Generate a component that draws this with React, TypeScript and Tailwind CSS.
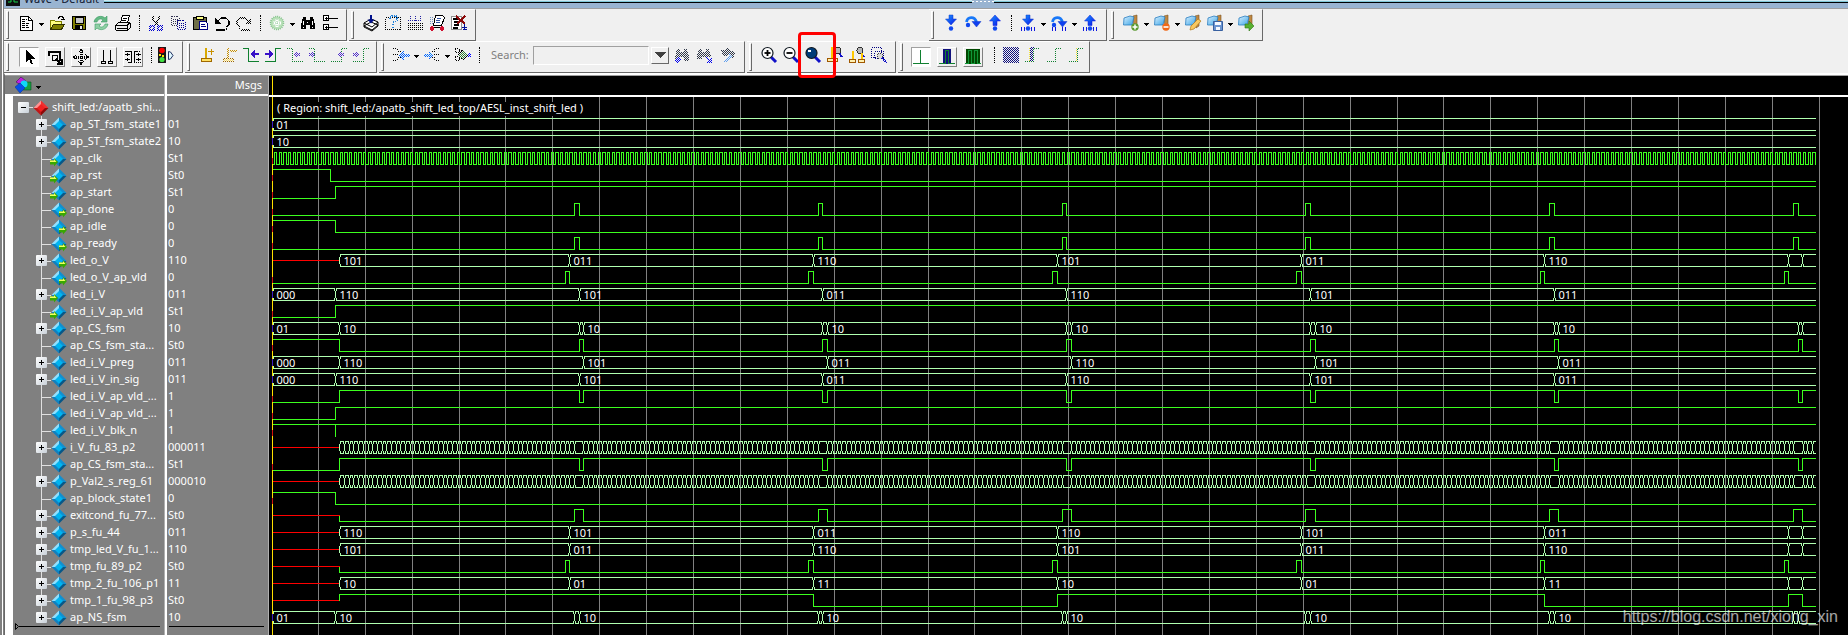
import React from "react";
import clsx from "clsx";

/* ---------- icon drawing helpers ---------- */

type IconProps = { children: React.ReactNode; dim?: boolean; smooth?: boolean };

const Icon = ({ children, dim, smooth }: IconProps) => (
  <svg
    viewBox="0 0 16 16"
    className="block h-4 w-4 overflow-visible"
    fill="none"
    shapeRendering={smooth ? "auto" : "crispEdges"}
    aria-hidden="true"
  >
    <g mask={dim ? "url(#dither)" : undefined}>{children}</g>
  </svg>
);

const Defs = () => (
  <svg className="absolute h-0 w-0" aria-hidden="true">
    <defs>
      <pattern id="checker" width="2" height="2" patternUnits="userSpaceOnUse">
        <rect width="1" height="1" fill="#fff" />
        <rect x="1" y="1" width="1" height="1" fill="#fff" />
      </pattern>
      <mask id="dither" maskUnits="userSpaceOnUse" x="-4" y="-4" width="28" height="28">
        <rect x="-4" y="-4" width="28" height="28" fill="url(#checker)" />
      </mask>
      <linearGradient id="blueArrow" x1="0" y1="0" x2="1" y2="1">
        <stop offset="0" stopColor="#1a9cff" />
        <stop offset="1" stopColor="#0a10e8" />
      </linearGradient>
      <linearGradient id="book" x1="0" y1="0" x2="1" y2="1">
        <stop offset="0" stopColor="#d8f0ff" />
        <stop offset="1" stopColor="#3ba4e6" />
      </linearGradient>
    </defs>
  </svg>
);

const DocIcon = () => (
  <Icon>
    <path d="M2.5 1.5h8l4 4v10h-12z" fill="#fff" stroke="#000" />
    <path d="M10.5 1.5v4h4" stroke="#000" />
    <path d="M4 4.5h5M4 6.5h4M4 8.5h8M4 10.5h6M4 12.5h8" stroke="#000" strokeDasharray="3 1" />
  </Icon>
);

const FolderIcon = () => (
  <Icon>
    <path d="M1.5 14.5v-9h4l1 1h6v3" fill="#ffff80" stroke="#808000" />
    <path d="M1.5 14.5l3-5h11l-3 5z" fill="#808000" stroke="#303000" />
    <path d="M9.5 3.5v-1h1v-1h3v1h1v2M12 4.5h4" stroke="#000" />
  </Icon>
);

const SaveIcon = () => (
  <Icon>
    <path d="M1.5 1.5h13v13h-12l-1-1z" fill="#808000" stroke="#000" />
    <path d="M4 2h8v6H4z" fill="#c8c8c8" stroke="#000" />
    <path d="M4 10h8v4H4z" fill="#000" />
    <path d="M9 11h2v3H9z" fill="#e8e8e8" />
  </Icon>
);

const ReloadIcon = () => (
  <Icon smooth>
    <path d="M1 7c1-6 8-7 11-4l2-2v6H8l2-2c-2-2-5-1-6 2z" fill="#65b985" stroke="#3d9c64" strokeWidth=".6" />
    <path d="M15 9c-1 6-8 7-11 4l-2 2V9h6l-2 2c2 2 5 1 6-2z" fill="#8fd0a5" stroke="#3d9c64" strokeWidth=".6" />
  </Icon>
);

const PrintIcon = () => (
  <Icon>
    <path d="M5.5 7.5l2-7h7l-2 7z" fill="#fff" stroke="#000" />
    <path d="M8 3.5h4M7 5.5h4" stroke="#000" />
    <path d="M.5 10.5l3-3h11l1 1v4l-3 3h-11l-1-1z" fill="#eee" stroke="#000" />
    <path d="M1 10.5h11l3-3M2 13.5h10M12.5 10v5" stroke="#000" />
  </Icon>
);

const CutIcon = () => (
  <Icon dim>
    <path d="M5 1v3l4 6M11 1v3l-4 6" stroke="#000" strokeWidth="1.6" />
    <path d="M2 11h4v4H2zM10 11h4v4h-4z" stroke="#0000d0" strokeWidth="1.6" />
  </Icon>
);

const CopyIcon = () => (
  <Icon>
    <path d="M1.5 1.5h6l2 2v7h-8zM3 4.5h5M3 6.5h5M3 8.5h5" stroke="#303050" strokeDasharray="1 1" />
    <path d="M7.5 5.5h6l2 2v7h-8z" fill="#f0f0f0" />
    <path d="M7.5 5.5h6l2 2v7h-8zM9 8.5h5M9 10.5h5M9 12.5h5" stroke="#000090" strokeDasharray="1 1" />
  </Icon>
);

const PasteIcon = () => (
  <Icon>
    <path d="M1 2h13v12H1z" fill="#707048" stroke="#000" />
    <path d="M4 1h7v3H4z" fill="#ffff80" stroke="#000" />
    <path d="M7.5 6.5h6l2 2v6h-8z" fill="#fff" stroke="#000080" />
    <path d="M9 9.5h4M9 11.5h5" stroke="#000080" />
  </Icon>
);

const UndoIcon = ({ redo }: { redo?: boolean }) => (
  <Icon dim={redo}>
    <g transform={redo ? "translate(16 0) scale(-1 1)" : undefined}>
      <path d="M1 3v6h6z" fill="#000" />
      <path d="M4 6l3-3h5l3 3v4l-3 2" stroke="#000" strokeWidth="1.4" />
      <path d="M2 14.5h9M12 13.5h1" stroke="#000" strokeWidth="2" />
    </g>
  </Icon>
);

const AddCircleIcon = () => (
  <Icon smooth>
    <circle cx="8" cy="8" r="6.5" fill="#b8e0b8" stroke="#80c088" strokeWidth="1.5" strokeDasharray="1 1" />
    <path d="M8 4v8M4 8h8" stroke="#fff" strokeWidth="3" />
    <path d="M8 4v8M4 8h8" stroke="#90c898" strokeDasharray="1 1" />
  </Icon>
);

const FindIcon = ({ dim, handle }: { dim?: boolean; handle?: boolean }) => (
  <Icon dim={dim}>
    <path d="M3 2h3v3h4V2h3l2 8v4h-5v-4H6v4H1v-4z" fill={dim ? "#303848" : "#000"} />
    {!dim && <path d="M4 6l-1 4M7 7h1M12 6l1 4M3 12h1M12 12h1" stroke="#fff" />}
    {handle && <path d="M2 15l4-4" stroke="#0000f0" strokeWidth="3" />}
  </Icon>
);

const FindNextIcon = () => (
  <Icon dim>
    <path d="M3 2h3v3h4V2h3l2 8H6v2H1v-3z" fill="#303848" />
    <path d="M10 10l5 5M11 15h4v-4" stroke="#0000f0" strokeWidth="2" />
  </Icon>
);

const FindOptIcon = () => (
  <Icon dim>
    <path d="M1 3h4l3-2 4 3 4 2-3 5-4-3-5 2z" fill="#303848" />
    <path d="M5 15l6-7" stroke="#60a0f0" strokeWidth="3" />
  </Icon>
);

const TreeIcon = () => (
  <Icon>
    <path d="M1.5.5h5v5h-5zM1.5 9.5h5v5h-5z" fill="#fff" stroke="#000" />
    <path d="M3 3.5h3M4.5 2v3M3 12.5h3M4.5 11v3M7 3.5h9M7 12.5h9" stroke="#000" />
  </Icon>
);

const StackIcon = () => (
  <Icon smooth>
    <path d="M1 11l7-4 7 3-6 5zM1 8l7-4 7 3-6 5z" fill="#fff" stroke="#000" />
    <path d="M1 8v4l8 4 6-5V7" stroke="#000" />
    <path d="M8 0v6" stroke="#00108c" strokeWidth="2" />
    <path d="M4.5 4.5h7L8 8.5z" fill="#00108c" />
  </Icon>
);

const HelpDocIcon = () => (
  <Icon>
    <path d="M.5 2.5h15v12H.5z" stroke="#000" strokeDasharray="1 1" />
    <path d="M5 4V2l2-1h4l1 2v2L8 8v3M8 12v2" stroke="#2080d8" strokeWidth="2" strokeDasharray="1 1" />
  </Icon>
);

const GridDownIcon = () => (
  <Icon>
    <path d="M1 8.5h15M1 10.5h15M1 12.5h15M1 14.5h15" stroke="#000" strokeDasharray="1 1" />
    <path d="M3.5 1v6M8.5 1v6M13.5 1v6M1 5.5h14" stroke="#2020a0" strokeDasharray="1 1" />
  </Icon>
);

const ScrollIcon = () => (
  <Icon>
    <path d="M1 2h4M1 4h3M1 6h3M1 8h3" stroke="#7090c0" strokeDasharray="1 1" />
    <path d="M6.5.5h7l2 2-3 8h-8z" fill="#fff" stroke="#000" />
    <path d="M8 3.5h4M7 5.5h4M7 7.5h4" stroke="#3050a0" />
    <path d="M3 12.5h10" stroke="#000" />
    <path d="M1 12h4v3H1zM11 12h4v3h-4zM2 11h2v5H2zM12 11h2v5h-2z" fill="#d01030" />
  </Icon>
);

const RemoveListIcon = () => (
  <Icon>
    <path d="M.5 1.5h10v13H.5z" fill="#fff" stroke="#909090" />
    <path d="M2 4h5M3 7h5M3 10h5M2 13h5" stroke="#000" strokeWidth="1.5" />
    <path d="M5 1l9 8M14 1L6 9" stroke="#8c0a0a" strokeWidth="2" />
    <path d="M13.5 9v6M11 12.5h5M12 14.5h4" stroke="#00109c" />
  </Icon>
);

type StepProps = { dir: "down" | "over" | "up"; bars?: boolean };
const StepIcon = ({ dir, bars }: StepProps) => (
  <Icon smooth>
    {dir === "down" && <path d="M6 0h4v4h3.5L8 10 2.500 4H6z" fill="url(#blueArrow)" stroke="#1038c8" strokeWidth=".5" />}
    {dir === "up" && <path d="M6 10.5h4V6h3.500L8 0 2.500 6H6z" fill="url(#blueArrow)" stroke="#1018d8" strokeWidth=".5" />}
    {dir === "over" && (
      <>
        <path d="M1.5 7C2.500 1.500 9.500 1 11.500 7" stroke="#1878f8" strokeWidth="2.800" />
        <path d="M7 6.5h9L11.500 12z" fill="#1040f0" stroke="#1038c8" strokeWidth=".5" />
      </>
    )}
    <circle cx={dir === "over" ? 3 : 8} cy={dir === "over" ? 10 : 13.5} r="2.200" fill="#1048f0" />
    {bars && <path d="M1.5 11.5v4M4.500 11.500v4M11.500 11.500v4M14.500 11.500v4" stroke="#1018e0" shapeRendering="crispEdges" />}
  </Icon>
);

type BookmarkProps = { kind: "add" | "remove" | "edit" | "save" | "go" };
const BookmarkIcon = ({ kind }: BookmarkProps) => (
  <Icon smooth>
    <path d="M10 1l4-1v11l-3 2z" fill="#c08840" stroke="#7a5220" strokeWidth=".6" />
    <path d="M1 3l6-2 4 1-2 8H.5z" fill="url(#book)" stroke="#2a7ec0" strokeWidth=".8" />
    {kind === "add" && (
      <>
        <circle cx="12" cy="12" r="3.700" fill="#5a9a30" />
        <path d="M12 9.500v5M9.500 12h5" stroke="#fff" strokeWidth="1.500" />
      </>
    )}
    {kind === "remove" && (
      <>
        <circle cx="12" cy="12" r="3.700" fill="#f06818" />
        <path d="M9.500 12h5" stroke="#fff" strokeWidth="1.600" />
      </>
    )}
    {kind === "edit" && <path d="M5 15l1-4 7-7 3 2-7 8z" fill="#f8c860" stroke="#b07818" strokeWidth=".7" />}
    {kind === "save" && (
      <>
        <path d="M6.500 6.500h9v9h-9z" fill="#6a94d0" stroke="#3860a0" />
        <path d="M8 7h6v3H8zM9 12h4v3H9z" fill="#f4f8ff" />
      </>
    )}
    {kind === "go" && <path d="M7 9h4V6l5 5-5 5v-3H7z" fill="#58b030" stroke="#307818" strokeWidth=".6" />}
  </Icon>
);

const PointerIcon = () => (
  <Icon>
    <path d="M5 1v12l3-3 2 5h2l-2-5h4z" fill="#000" />
  </Icon>
);

const ZoomModeIcon = () => (
  <Icon>
    <path d="M2 7V3h11v9" stroke="#000" strokeWidth="1.500" />
    <path d="M5.500 6.500h5v5h-5z" stroke="#000" />
    <path d="M9 10l5 5M15 10v5h-5" stroke="#000" strokeWidth="2" />
  </Icon>
);

const PanIcon = () => (
  <Icon>
    <path d="M8 1v14M1 8h14" stroke="#000" strokeWidth="3" strokeDasharray="1 1" />
    <path d="M5.500 3.500L8 .5l2.500 3M5.500 12.500l2.500 3 2.500-3M3.500 5.500L.5 8l3 2.500M12.500 5.500l3 2.500-3 2.500" stroke="#000" />
  </Icon>
);

const TwoCursorIcon = () => (
  <Icon>
    <path d="M4.500 1v11M11.500 1v11M2 12.500h5M2 14.500h5M2.500 12v3M6.500 12v3M9 12.500h5M9 14.500h5M9.500 12v3M13.500 12v3" stroke="#000" />
  </Icon>
);

const EditModeIcon = () => (
  <Icon>
    <path d="M0 2.500h6.500v11H3M9.500 14v-12h3" stroke="#000" />
    <path d="M12 2.500h4M11 13.500h5" stroke="#000" strokeDasharray="1 1" />
    <path d="M0 5.500h5M0 10.500h5M11 5.500h5M11 10.500h5M2.500 4v3M2.500 9v3M13.500 4v3M13.500 9v3" stroke="#000" />
  </Icon>
);

const TrafficIcon = () => (
  <Icon smooth>
    <path d="M0 0h8v16H0z" fill="#181818" />
    <circle cx="4" cy="3.500" r="2.800" fill="#f00" />
    <path d="M1 7h2v2H1zM4 8h2v2H4z" fill="#ffe000" />
    <circle cx="4" cy="12.500" r="2.600" fill="#40e040" />
    <path d="M10.500 4.500v8l2-.5 2.500-3.500-2.500-3.500z" fill="#e0f8ff" stroke="#203060" />
  </Icon>
);

const CursorAddIcon = ({ dim }: { dim?: boolean }) => (
  <Icon dim={dim}>
    <path d="M7 1v10" stroke={dim ? "#c89000" : "#d8a800"} strokeWidth="2" />
    <path d="M2 11.500h10v3H2z" fill="#ffe060" stroke="#a06800" />
    <path d={dim ? "M9 4h7" : "M9 4.500h6M12.500 2v6"} stroke="#c89000" strokeWidth={dim ? 2 : 1} />
  </Icon>
);

const EdgeIcon = ({ rise, dim, flip }: { rise?: boolean; dim?: boolean; flip?: boolean }) => (
  <Icon>
    <path
      d={rise ? "M0 14.500h10.500v-13H16" : "M0 1.500h5.500v13H16"}
      stroke="#108030"
      strokeDasharray={dim ? "1 1" : undefined}
    />
    {dim ? (
      <path
        d={flip ? "M0 6.500h5M1 7.500h5M0 8.500h5M3 5.500h1M3 9.500h1" : "M8 6.500h5M7 7.500h5M8 8.500h5M9 5.500h1M9 9.500h1"}
        stroke="#5030c8"
        strokeDasharray="1 1"
      />
    ) : (
      <path d={flip ? "M0 6h4V3l5 4-5 4V8H0z" : "M16 6h-4V3L7 7l5 4V8h4z"} fill="#3810c8" />
    )}
  </Icon>
);

const BranchIcon = ({ kind }: { kind: "out" | "in" | "mix" }) => (
  <Icon>
    <g strokeDasharray="1 1" stroke="#000">
      {kind === "out" && <path d="M0 1.500h4M4 2.500h2M5 4.500h3M0 7.500h6M5 10.500h3M4 12.500h2M0 13.500h4" />}
      {kind === "in" && <path d="M12 1.500h4M10 2.500h2M8 4.500h3M10 7.500h6M8 10.500h3M10 12.500h2M12 13.500h4" />}
      {kind === "mix" && <path d="M0 1.500h4v4H0M0 9.500h4v4H0M0 1.500v4M0 9.500v4M4 3.500h4M4 11.500h4" />}
    </g>
    <g mask="url(#dither)">
      {kind === "out" && <path d="M6 8l4-4v3h6v2h-6v3z" fill="#0060ff" stroke="#0060ff" />}
      {kind === "in" && <path d="M9 8L5 4v3H0v2h5v3z" fill="#0080ff" stroke="#0060ff" />}
      {kind === "mix" && <path d="M3 8l5-5 5 5-5 5z" fill="#308030" stroke="#000" />}
      {kind === "mix" && <path d="M13 6h3v4h-3z" fill="#0000ff" />}
    </g>
  </Icon>
);

const MagnifierIcon = ({ kind }: { kind: "in" | "out" | "full" }) => (
  <Icon smooth>
    <path d="M10 10l5 5" stroke="#1010c8" strokeWidth="3" />
    <circle cx="6.500" cy="6" r="5.500" fill={kind === "full" ? "#003c78" : "#fff"} stroke="#101820" strokeWidth="1.200" />
    {kind !== "full" && <path d="M3.500 6h6" stroke="#000" strokeWidth="1.800" />}
    {kind === "in" && <path d="M6.500 3v6" stroke="#000" strokeWidth="1.800" />}
    {kind === "full" && <path d="M3 3h3v2H3z" fill="#fff" />}
  </Icon>
);

const ZoomCursorIcon = ({ pair }: { pair?: boolean }) => (
  <Icon>
    <path d="M12 6l3 4" stroke="#1010c8" strokeWidth="2" />
    <circle cx="11" cy="3.500" r="3" fill="#b8b8b8" stroke="#303030" />
    {pair ? (
      <>
        <path d="M4 4v8M13 6v6" stroke="#ffc800" strokeWidth="2" />
        <path d="M.5 12.500h6v3h-6zM9.500 12.500h6v3h-6z" fill="#fff0b0" stroke="#a05800" />
      </>
    ) : (
      <>
        <path d="M5 0v11" stroke="#ffc800" strokeWidth="2" />
        <path d="M.5 11.500h10v3H.5z" fill="#fff0b0" stroke="#a05800" />
      </>
    )}
  </Icon>
);

const ZoomAreaIcon = () => (
  <Icon>
    <path d="M.5.5h10v10H.5zM3.500 4.500h9v7h-9z" stroke="#000080" strokeDasharray="1 1" />
    <circle cx="9" cy="9" r="3" fill="#d8d8d8" stroke="#404040" strokeDasharray="1 1" />
    <path d="M11 11l5 5" stroke="#1010c8" strokeWidth="2" strokeDasharray="1 1" />
  </Icon>
);

const PulseIcon = ({ kind }: { kind: "line" | "narrow" | "wide" }) => (
  <Icon>
    {kind === "line" && <path d="M0 14.500h16M7.500 1v13" stroke="#108030" />}
    {kind === "narrow" && (
      <>
        <path d="M4 0h8v15H4z" fill="#10107c" />
        <path d="M0 14.500h6.500v-13h3v13H16" stroke="#108030" />
      </>
    )}
    {kind === "wide" && (
      <>
        <path d="M1 0h14v15H1z" fill="#004800" />
        <path d="M0 14.500h3.500v-13h3v13h3v-13h3v13H16" stroke="#109838" />
      </>
    )}
  </Icon>
);

const ExpandIcon = ({ kind }: { kind: "all" | "delta" | "edge" | "event" }) => (
  <Icon>
    {kind === "all" && <path d="M0 0h16v16H0z" fill="#10107c" mask="url(#dither)" />}
    {kind === "delta" && <path d="M5 0h4v15H5z" fill="#10107c" mask="url(#dither)" />}
    {kind !== "all" && <path d="M0 14.500h8.500v-13H15" stroke="#108030" strokeDasharray="1 1" />}
    {kind === "event" && <path d="M7.500 1v14" stroke="#f0e040" strokeDasharray="1 1" />}
    {kind === "delta" && <path d="M4.500 1v14" stroke="#f0e040" strokeDasharray="1 1" />}
  </Icon>
);

/* ---------- toolbars ---------- */

const Tool = ({ label, children }: { label: string; children: React.ReactNode }) => (
  <button type="button" aria-label={label} className="relative flex h-[22px] w-[22px] shrink-0 items-center justify-center">
    {children}
  </button>
);

const Caret = ({ label = "More" }: { label?: string }) => (
  <button type="button" aria-label={label} className="flex h-[22px] w-[9px] shrink-0 items-center justify-center">
    <svg viewBox="0 0 5 3" className="mt-0.5 block h-[3px] w-[5px]" shapeRendering="crispEdges" aria-hidden="true">
      <path d="M0 0h5v1H4v1H3v1H2V2H1V1H0z" />
    </svg>
  </button>
);

const Separator = () => (
  <span className="flex w-[11px] shrink-0 justify-center">
    <span className="h-4 border-l border-dotted border-black" />
  </span>
);

const Mode = ({ label, active, children }: { label: string; active?: boolean; children: React.ReactNode }) => (
  <button
    type="button"
    aria-label={label}
    aria-pressed={!!active}
    className={clsx(
      "mr-1.5 mt-1 flex h-5 w-5 shrink-0 items-center justify-center border",
      active
        ? "border-b-white border-l-[#a0a0a0] border-r-white border-t-[#a0a0a0] bg-white"
        : "border-b-[#808080] border-l-white border-r-[#808080] border-t-white",
    )}
  >
    {children}
  </button>
);

const Toolbar = ({ label, className, children }: { label: string; className?: string; children: React.ReactNode }) => (
  <div
    role="toolbar"
    aria-label={label}
    className={clsx(
      "mr-0.5 flex h-8 shrink-0 items-center border-b border-r border-t border-b-[#696969] border-r-[#696969] border-t-white pb-1",
      className,
    )}
  >
    <span className="mb-[-4px] ml-0.5 mr-1.5 h-[28px] w-[3px] shrink-0 border border-b-[#696969] border-l-white border-r-[#696969] border-t-white" />
    {children}
  </div>
);

const ToolbarRows = () => (
  <div className="flex flex-col bg-[#f0f0f0]">
    <div className="flex">
      <Toolbar label="Standard" className="w-[343px]">
        <Tool label="New"><DocIcon /></Tool>
        <Caret />
        <Tool label="Open"><FolderIcon /></Tool>
        <Tool label="Save"><SaveIcon /></Tool>
        <Tool label="Reload"><ReloadIcon /></Tool>
        <Tool label="Print"><PrintIcon /></Tool>
        <Separator />
        <Tool label="Cut"><CutIcon /></Tool>
        <Tool label="Copy"><CopyIcon /></Tool>
        <Tool label="Paste"><PasteIcon /></Tool>
        <Tool label="Undo"><UndoIcon /></Tool>
        <Tool label="Redo"><UndoIcon redo /></Tool>
        <Separator />
        <Tool label="Add"><AddCircleIcon /></Tool>
        <Caret />
        <Tool label="Find"><FindIcon /></Tool>
        <Tool label="Collapse all"><TreeIcon /></Tool>
      </Toolbar>
      <Toolbar label="Compile" className="w-[127px]">
        <Tool label="Compile"><StackIcon /></Tool>
        <Tool label="Compile out of date"><HelpDocIcon /></Tool>
        <Tool label="Compile all"><GridDownIcon /></Tool>
        <Tool label="Simulate"><ScrollIcon /></Tool>
        <Tool label="Break"><RemoveListIcon /></Tool>
      </Toolbar>
      <Toolbar label="Step" className="ml-[451px] w-[178px]">
        <Tool label="Step into"><StepIcon dir="down" /></Tool>
        <Tool label="Step over"><StepIcon dir="over" /></Tool>
        <Tool label="Step out"><StepIcon dir="up" /></Tool>
        <Separator />
        <Tool label="Step into current"><StepIcon dir="down" bars /></Tool>
        <Caret />
        <Tool label="Step over current"><StepIcon dir="over" bars /></Tool>
        <Caret />
        <Tool label="Step out current"><StepIcon dir="up" bars /></Tool>
      </Toolbar>
      <Toolbar label="Bookmarks" className="w-[154px]">
        <Tool label="Add bookmark"><BookmarkIcon kind="add" /></Tool>
        <Caret />
        <Tool label="Delete bookmark"><BookmarkIcon kind="remove" /></Tool>
        <Caret />
        <Tool label="Manage bookmarks"><BookmarkIcon kind="edit" /></Tool>
        <Tool label="Save bookmarks"><BookmarkIcon kind="save" /></Tool>
        <Caret />
        <Tool label="Jump to bookmark"><BookmarkIcon kind="go" /></Tool>
      </Toolbar>
    </div>
    <div className="flex">
      <Toolbar label="Mouse mode" className="w-[179px]">
        <span className="w-1 shrink-0" />
        <Mode label="Select mode" active><PointerIcon /></Mode>
        <Mode label="Zoom mode"><ZoomModeIcon /></Mode>
        <Mode label="Pan mode"><PanIcon /></Mode>
        <Mode label="Two cursor mode"><TwoCursorIcon /></Mode>
        <Mode label="Edit mode"><EditModeIcon /></Mode>
        <span className="flex w-1 shrink-0 justify-center">
          <span className="h-4 border-l border-dotted border-black" />
        </span>
        <span className="w-0.5 shrink-0" />
        <Tool label="Stop drawing"><TrafficIcon /></Tool>
      </Toolbar>
      <Toolbar label="Wave cursor" className="w-[192px]">
        <Tool label="Insert cursor"><CursorAddIcon /></Tool>
        <Tool label="Delete cursor"><CursorAddIcon dim /></Tool>
        <Tool label="Previous transition"><EdgeIcon /></Tool>
        <Tool label="Next transition"><EdgeIcon rise flip /></Tool>
        <Tool label="Previous falling edge"><EdgeIcon dim /></Tool>
        <Tool label="Next falling edge"><EdgeIcon dim flip /></Tool>
        <Tool label="Previous rising edge"><EdgeIcon rise dim /></Tool>
        <Tool label="Next rising edge"><EdgeIcon rise dim flip /></Tool>
      </Toolbar>
      <Toolbar label="Search" className="w-[366px]">
        <Tool label="Previous event"><BranchIcon kind="out" /></Tool>
        <Caret />
        <Tool label="Next event"><BranchIcon kind="in" /></Tool>
        <Caret />
        <Tool label="Trace"><BranchIcon kind="mix" /></Tool>
        <Separator />
        <label htmlFor="search" className="ml-1.5 w-[42px] shrink-0 text-[11px] text-[#808080]">Search:</label>
        <input
          id="search"
          type="text"
          className="h-[19px] w-[116px] shrink-0 border border-b-white border-l-[#a0a0a0] border-r-white border-t-[#a0a0a0] bg-[#f0f0f0] px-1"
        />
        <button
          type="button"
          aria-label="Search history"
          className="mx-0.5 flex h-[17px] w-[18px] shrink-0 items-center justify-center border border-b-[#696969] border-l-white border-r-[#696969] border-t-white"
        >
          <svg viewBox="0 0 11 6" className="block h-[6px] w-[11px]" shapeRendering="crispEdges" aria-hidden="true">
            <path d="M0 0h11L6 6H5z" fill="#404040" />
          </svg>
        </button>
        <Tool label="Search backward"><FindIcon dim handle /></Tool>
        <Tool label="Search forward"><FindNextIcon /></Tool>
        <span className="w-0.5 shrink-0" />
        <Tool label="Search options"><FindOptIcon /></Tool>
      </Toolbar>
      <Toolbar label="Zoom" className="w-[149px]">
        <Tool label="Zoom in"><MagnifierIcon kind="in" /></Tool>
        <Tool label="Zoom out"><MagnifierIcon kind="out" /></Tool>
        <Tool label="Zoom full">
          <MagnifierIcon kind="full" />
          <span className="absolute -left-1 -top-3 z-10 h-[46px] w-[38px] rounded-sm border-[3px] border-[#ff0000]" />
        </Tool>
        <Tool label="Zoom in on cursor"><ZoomCursorIcon /></Tool>
        <Tool label="Zoom between cursors"><ZoomCursorIcon pair /></Tool>
        <Tool label="Zoom other window"><ZoomAreaIcon /></Tool>
      </Toolbar>
      <Toolbar label="Expanded time" className="w-[192px]">
        <span className="w-0.5 shrink-0" />
        <Mode label="Expanded time off" active><PulseIcon kind="line" /></Mode>
        <Mode label="Delta mode"><PulseIcon kind="narrow" /></Mode>
        <Mode label="Event mode"><PulseIcon kind="wide" /></Mode>
        <Separator />
        <Tool label="Expand all"><ExpandIcon kind="all" /></Tool>
        <Tool label="Expand at cursor"><ExpandIcon kind="delta" /></Tool>
        <Tool label="Collapse all time"><ExpandIcon kind="edge" /></Tool>
        <Tool label="Collapse at cursor"><ExpandIcon kind="event" /></Tool>
      </Toolbar>
    </div>
  </div>
);

/* ---------- signals ---------- */

const ROW = 17;
const ORIGIN = 269; // left edge of the wave canvas
const TICK = 4.69;
const PERIOD = 243.8;
const DONE = 574.4;
const END = 1816;
const RESET = 335;
const FIRST = 339;

const cycles = [0, 1, 2, 3, 4, 5];
const at = (ticks: number, k: number) => DONE + ticks * TICK + k * PERIOD;
const pulses = (from: number, to: number) => cycles.flatMap((k) => [at(from, k), at(to, k)]);

type Cut = [number, string];
type Signal = {
  name: string;
  value: string;
  group?: boolean;
  port?: "in" | "out";
  level?: 0 | 1;
  unknown?: boolean;
  edges?: number[];
  cuts?: Cut[];
};

// bus that takes a new value once in every cycle
const steps = (ticks: number, labels: string[]): Cut[] => labels.map((l, k) => [at(ticks, k), l]);
const tail: Cut[] = [[at(-1, 5), ""], [at(2, 5), ""]];
const double = (ticks: number): Cut[] =>
  cycles.flatMap((k): Cut[] => [[at(ticks, k), ""], [at(ticks + 1, k), k < 5 ? "10" : ""]]);

const counter: Cut[] = (() => {
  const out: Cut[] = [];
  const first = Math.round((FIRST - DONE) / TICK);
  for (let n = first; DONE + n * TICK < END - 2; n++) {
    if (n % 52 === 1) continue;
    out.push([DONE + n * TICK, ""]);
  }
  return out;
})();

const clock = (() => {
  const out: number[] = [];
  for (let x = 274.4; x < END; x += TICK) out.push(x, x + TICK / 2);
  return out;
})();

const signals: Signal[] = [
  { name: "ap_ST_fsm_state1", value: "01", group: true, cuts: [[272, "01"]] },
  { name: "ap_ST_fsm_state2", value: "10", group: true, cuts: [[272, "10"]] },
  { name: "ap_clk", value: "St1", port: "in", level: 0, edges: clock },
  { name: "ap_rst", value: "St0", port: "in", level: 1, edges: [330] },
  { name: "ap_start", value: "St1", port: "in", level: 0, edges: [RESET] },
  { name: "ap_done", value: "0", port: "out", level: 0, edges: pulses(0, 1) },
  { name: "ap_idle", value: "0", port: "out", level: 1, edges: [RESET] },
  { name: "ap_ready", value: "0", port: "out", level: 0, edges: pulses(0, 1) },
  { name: "led_o_V", value: "110", group: true, port: "out", unknown: true, cuts: [[FIRST, "101"], ...steps(-1, ["011", "110", "101", "011", "110"]), ...tail] },
  { name: "led_o_V_ap_vld", value: "0", port: "out", level: 0, edges: pulses(-2, -1) },
  { name: "led_i_V", value: "011", group: true, port: "in", cuts: [[272, "000"], [RESET, "110"], ...steps(1, ["101", "011", "110", "101", "011"])] },
  { name: "led_i_V_ap_vld", value: "St1", port: "in", level: 0, edges: [RESET] },
  { name: "ap_CS_fsm", value: "10", group: true, cuts: [[272, "01"], [FIRST, "10"], ...double(1)] },
  { name: "ap_CS_fsm_sta...", value: "St0", level: 1, edges: [FIRST, ...pulses(1, 2)] },
  { name: "led_i_V_preg", value: "011", group: true, cuts: [[272, "000"], [FIRST, "110"], ...steps(2, ["101", "011", "110", "101", "011"])] },
  { name: "led_i_V_in_sig", value: "011", group: true, cuts: [[272, "000"], [RESET, "110"], ...steps(1, ["101", "011", "110", "101", "011"])] },
  { name: "led_i_V_ap_vld_...", value: "1", level: 0, edges: [FIRST, ...pulses(1, 2)] },
  { name: "led_i_V_ap_vld_...", value: "1", level: 0, edges: [RESET] },
  { name: "led_i_V_blk_n", value: "1", level: 1, edges: [RESET, RESET] },
  { name: "i_V_fu_83_p2", value: "000011", group: true, unknown: true, cuts: counter },
  { name: "ap_CS_fsm_sta...", value: "St1", level: 0, edges: [FIRST, ...pulses(1, 2)] },
  { name: "p_Val2_s_reg_61", value: "000010", group: true, unknown: true, cuts: counter },
  { name: "ap_block_state1", value: "0", level: 1, edges: [RESET] },
  { name: "exitcond_fu_77...", value: "St0", group: true, unknown: true, level: 0, edges: pulses(0, 2) },
  { name: "p_s_fu_44", value: "011", group: true, unknown: true, cuts: [[FIRST, "110"], ...steps(-1, ["101", "011", "110", "101", "011"]), ...tail] },
  { name: "tmp_led_V_fu_1...", value: "110", group: true, unknown: true, cuts: [[FIRST, "101"], ...steps(-1, ["011", "110", "101", "011", "110"]), ...tail] },
  { name: "tmp_fu_89_p2", value: "St0", group: true, unknown: true, level: 0, edges: pulses(-2, -1) },
  { name: "tmp_2_fu_106_p1", value: "11", group: true, unknown: true, cuts: [[FIRST, "10"], ...steps(-1, ["01", "11", "10", "01", "11"]), ...tail] },
  { name: "tmp_1_fu_98_p3", value: "St0", group: true, unknown: true, level: 1, edges: [at(-1, 1), at(-1, 2), at(-1, 4), at(-1, 5), at(2, 5)] },
  { name: "ap_NS_fsm", value: "10", group: true, cuts: [[272, "01"], [RESET, "10"], ...double(0)] },
];

const px = (x: number) => Math.floor(x) - ORIGIN + 0.5;

const logicPath = (s: Signal) => {
  let level = s.level ?? 0;
  let d = s.unknown ? `M${px(FIRST)} 8.5V${level ? 2.5 : 14.5}` : `M${px(272)} ${level ? 2.5 : 14.5}`;
  for (const x of s.edges ?? []) {
    level = level ? 0 : 1;
    d += `H${px(x)}V${level ? 2.5 : 14.5}`;
  }
  return d + `H${END - ORIGIN}`;
};

const busPath = (s: Signal) => {
  const cuts = s.cuts ?? [];
  let d = "";
  cuts.forEach(([pos], i) => {
    const x = px(pos);
    const end = i + 1 < cuts.length ? px(cuts[i + 1][0]) - 0.5 : END - ORIGIN;
    if (i > 0) d += `M${x - 1} 2v3M${x - 1} 12v3`;
    d += `M${x + 1} 2v3M${x + 1} 12v3`;
    if (pos > 272) d += `M${x} 5v7`;
    d += `M${x + 0.5} 2.5H${end}M${x + 0.5} 14.5H${end}`;
  });
  return d;
};

const Wave = ({ signal, row }: { signal: Signal; row: number }) => (
  <g transform={`translate(0 ${2 + row * ROW})`}>
    {signal.unknown && <path d={`M3 8.500H${px(FIRST)}`} stroke="#ff0000" />}
    {signal.cuts ? (
      <path d={busPath(signal)} stroke="#b0ffb0" />
    ) : (
      <path d={logicPath(signal)} stroke="#3cff1e" />
    )}
    {signal.cuts?.map(([x, label], i) =>
      label ? (
        <text key={i} x={px(x) + 4} y="13" fill="#fff">
          {label}
        </text>
      ) : null,
    )}
    <path d="M3.500 0v17" stroke="#ffe000" />
    {!signal.unknown && <path d={signal.cuts ? "M3.500 5v7" : "M3.500 8v6"} stroke={signal.cuts ? "#4020c0" : "#d01010"} />}
  </g>
);

const gridLines = Array.from({ length: 33 }, (_, i) => Math.floor(318.3 + i * 46.9) - ORIGIN + 0.5);

const WaveCanvas = () => (
  <svg width="1579" height="538" className="block" fill="none" shapeRendering="crispEdges" role="img" aria-label="Waveforms">
    {gridLines.map((x) => (
      <path key={x} d={`M${x} 0v538`} stroke="#808080" />
    ))}
    <rect x="6" y="5" width="302" height="14" fill="#000" />
    <path d="M3.500 0v538" stroke="#ffe000" />
    <g className="text-[11px]">
      <text x="8" y="15" fill="#fff" xmlSpace="preserve">
        ( Region: shift_led:/apatb_shift_led_top/AESL_inst_shift_led )
      </text>
      {signals.map((s, i) => (
        <Wave key={i} signal={s} row={i + 1} />
      ))}
    </g>
  </svg>
);

/* ---------- signal tree ---------- */

const Diamond = ({ red, port }: { red?: boolean; port?: "in" | "out" }) => (
  <svg viewBox="0 0 16 16" className="block h-4 w-4 shrink-0 overflow-visible" aria-hidden="true">
    <path d="M8 .5L.5 8 8 8z" fill={red ? "#ff9090" : "#90e0ff"} />
    <path d="M8 .5L15.500 8H8z" fill={red ? "#f03030" : "#1090d0"} />
    <path d="M.5 8L8 15.500V8z" fill={red ? "#c01818" : "#1080c0"} />
    <path d="M15.500 8L8 15.500V8z" fill={red ? "#900808" : "#085888"} />
    <path d="M8 4L12 8 8 12 4 8z" fill={red ? "#f02020" : "#00b4f0"} />
    {port && (
      <g transform={port === "in" ? "translate(-1 7)" : "translate(8 7)"}>
        <path d="M0 2.500h4V0l4 4-4 4.500V6.500H0z" fill="#38a800" />
        <path d="M0 2.500h4V1l2.500 3H0z" fill="#f0ff60" />
      </g>
    )}
  </svg>
);

const Toggle = ({ open }: { open?: boolean }) => (
  <button
    type="button"
    aria-label={open ? "Collapse" : "Expand"}
    aria-expanded={!!open}
    className="relative flex h-[11px] w-[11px] shrink-0 items-center justify-center rounded-[1px] bg-gradient-to-br from-white to-[#c8d0d8]"
  >
    <svg viewBox="0 0 5 5" className="block h-[5px] w-[5px]" shapeRendering="crispEdges" aria-hidden="true">
      <path d={open ? "M0 2h5v1H0z" : "M0 2h2V0h1v2h2v1H3v2H2V3H0z"} />
    </svg>
  </button>
);

const TreeRow = ({ signal, last }: { signal: Signal; last: boolean }) => (
  <li className="flex h-[17px] items-center whitespace-pre pl-[23px]">
    <span className="relative flex h-[17px] w-[15px] items-center">
      <span className={clsx("absolute left-[5px] top-0 w-px bg-[#e0e0e0]", last ? "h-2" : "h-[17px]")} />
      <span className="absolute left-[5px] top-[9px] h-px w-2.5 bg-[#e0e0e0]" />
      {signal.group && <Toggle />}
    </span>
    <Diamond port={signal.port} />
    <span className="ml-[3px] self-start leading-[15px]">{signal.name}</span>
  </li>
);

const headerClass = "flex h-[21px] shrink-0 items-center border-b-2 border-t border-b-white border-t-[#a0a0a0]";

const NamePane = () => (
  <section className="flex w-[160px] shrink-0 flex-col border-r border-r-[#b0b0b0] bg-[#808080]">
    <div className={headerClass}>
      <button type="button" aria-label="Display options" className="ml-2.5 flex items-center">
        <svg viewBox="0 0 17 16" className="block h-4 w-[17px]" aria-hidden="true">
          <path d="M1 5l5-5 5 4-5 4z" fill="#c020e0" stroke="#401050" strokeWidth=".6" />
          <path d="M8 5h8v8H8z" fill="#18a040" stroke="#085020" strokeWidth=".6" />
          <circle cx="9" cy="7" r="3.500" fill="#10d8f8" />
          <path d="M0 10l5-4 5 5-5 5z" fill="#0850e8" stroke="#0838a0" strokeWidth=".6" />
        </svg>
        <svg viewBox="0 0 5 3" className="ml-1 mt-1 block h-[3px] w-[5px]" shapeRendering="crispEdges" aria-hidden="true">
          <path d="M0 0h5v1H4v1H3v1H2V2H1V1H0z" />
        </svg>
      </button>
    </div>
    <div className="flex-1 border-l-8 border-l-white pt-[3px]">
      <div className="flex h-[17px] items-center whitespace-pre pl-[5px]">
        <Toggle open />
        <span className="h-px w-1 bg-[#e0e0e0]" />
        <Diamond red />
        <span className="ml-[3px] self-start leading-[15px]">shift_led:/apatb_shi...</span>
      </div>
      <ul>
        {signals.map((s, i) => (
          <TreeRow key={i} signal={s} last={i === signals.length - 1} />
        ))}
      </ul>
      <div className="ml-0.5 mr-1 flex h-px items-center">
        <svg viewBox="0 0 4 7" className="block h-[7px] w-1 shrink-0" aria-hidden="true">
          <path d="M.5.5L3.500 3.500.5 6.500z" fill="#808080" stroke="#000" />
        </svg>
        <span className="h-px flex-1 bg-black" />
      </div>
    </div>
  </section>
);

const ValuePane = () => (
  <section className="ml-0.5 flex w-[102px] shrink-0 flex-col border-r border-r-[#b0b0b0] bg-[#808080]">
    <div className={clsx(headerClass, "justify-end pr-1.5")}>Msgs</div>
    <ul className="pl-px pt-5">
      {signals.map((s, i) => (
        <li key={i} className="h-[17px] leading-[15px]">
          {s.value}
        </li>
      ))}
    </ul>
    <span className="ml-0.5 mr-1 h-px shrink-0 bg-black" />
  </section>
);

const TitleBar = () => (
  <header className="flex h-[9px] items-end overflow-hidden border-b border-b-[#a0a0a0] bg-[#99b4d1]">
    <svg viewBox="0 0 14 16" className="mb-0.5 ml-0.5 block h-4 w-3.5" aria-hidden="true">
      <path d="M0 0h14v16H0z" fill="#101010" />
      <path d="M2 12h3v-3h3v3h4M2 8h4V5h6" fill="none" stroke="#18d048" />
    </svg>
    <h1 className="mb-px ml-1 w-20 whitespace-nowrap text-[11px] leading-4 text-[#101830]">Wave - Default</h1>
    <span className="mb-[5px] h-[3px] flex-1 border-b border-t border-b-black border-t-[#d0e8f0] bg-[#80c8d8]" />
    <span className="mb-[5px] h-[3px] w-[22px] border-y border-y-[#99b4d1] bg-[repeating-linear-gradient(90deg,#fff_0_2px,#99b4d1_2px_4px)]" />
    <span className="mb-[5px] h-[3px] w-[854px] border-b border-t border-b-black border-t-[#d0e8f0] bg-[#80c8d8]" />
  </header>
);

export default function App() {
  return (
    <div className="relative flex min-h-screen overflow-hidden bg-[#f0f0f0] font-['Noto_Sans',sans-serif] text-[11px] text-white">
      <Defs />
      <div className="w-1 shrink-0 border-l-2 border-r border-l-[#808080] border-r-[#808080] bg-white" />
      <div className="flex min-w-0 flex-1 flex-col">
        <TitleBar />
        <ToolbarRows />
        <main className="flex flex-1 border-l border-t-2 border-l-[#696969] border-t-white bg-white">
          <NamePane />
          <ValuePane />
          <section className="flex min-w-0 flex-1 flex-col overflow-hidden bg-black">
            <div className="h-[22px] shrink-0 border-b-2 border-t border-b-white border-t-[#a0a0a0] pl-[3px]">
              <div className="h-full w-px bg-[#ffe000]" />
            </div>
            <WaveCanvas />
          </section>
        </main>
      </div>
      <p className="absolute bottom-2 right-2.5 font-['Liberation_Sans',sans-serif] text-[16px] leading-5 text-white/65">
        https://blog.csdn.net/xiong_xin
      </p>
    </div>
  );
}
